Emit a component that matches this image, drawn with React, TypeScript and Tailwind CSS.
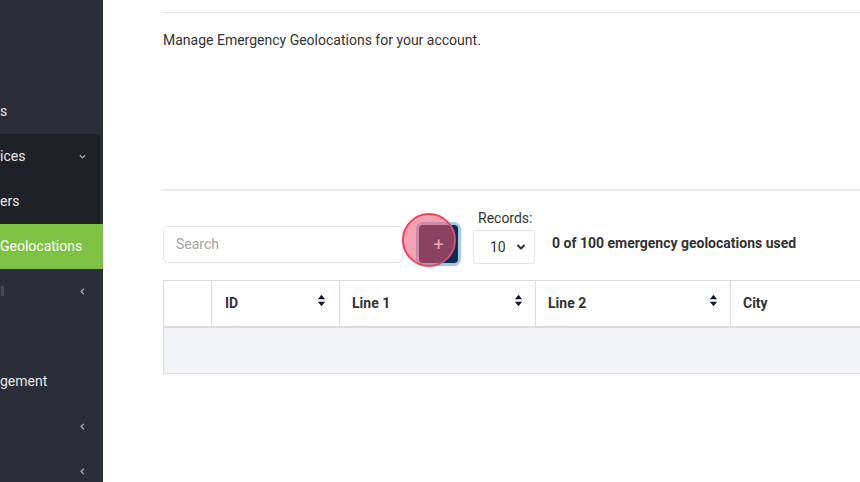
import React from 'react';

const font = { fontFamily: 'Roboto, "Liberation Sans", sans-serif' };

function Chevron({ dir }: { dir: 'down' | 'left' }) {
  return (
    <svg width="9" height="9" viewBox="0 0 10 10" className="text-gray-400">
      {dir === 'down' ? (
        <path d="M2 3.5 L5 6.5 L8 3.5" fill="none" stroke="currentColor" strokeWidth="1.6" />
      ) : (
        <path d="M6.5 2 L3.5 5 L6.5 8" fill="none" stroke="currentColor" strokeWidth="1.6" />
      )}
    </svg>
  );
}

function SortIcon() {
  return (
    <svg width="9" height="13" viewBox="0 0 10 16" className="text-gray-900 -mt-[6px]">
      <path d="M5 1 L9.5 6.5 H0.5 Z" fill="currentColor" />
      <path d="M5 15 L9.5 9.5 H0.5 Z" fill="currentColor" />
    </svg>
  );
}

const sideItems = [
  { label: 's', chevron: null, sub: false },
  { label: 'ices', chevron: 'down', sub: true },
  { label: 'ers', chevron: null, sub: true },
  { label: 'Geolocations', chevron: null, active: true },
  { label: '', chevron: 'left', faint: true },
  { label: '', chevron: null },
  { label: 'gement', chevron: null },
  { label: '', chevron: 'left' },
  { label: '', chevron: 'left' },
] as const;

export default function App() {
  return (
    <div className="flex w-[860px] h-[482px] overflow-hidden bg-white" style={font}>
      <aside className="w-[103px] shrink-0 bg-[#2b2e39] flex flex-col pt-[89px] border-r-[3px] border-[#2e2f33]">
        {sideItems.map((it, i) => (
          <div
            key={i}
            className={`h-[45px] shrink-0 flex items-center justify-between pr-[13px] text-[14px] ${
              'active' in it && it.active
                ? 'bg-[#7dc242] text-white -mr-[3px] pr-[16px]'
                : 'sub' in it && it.sub
                ? 'bg-[#1f2128] text-[#e6e6e6]'
                : 'text-[#e6e6e6]'
            }`}
          >
            <span className="whitespace-nowrap">
              {'faint' in it && it.faint ? <span className="inline-block w-[3px] h-[10px] bg-[#444955] ml-[1px]" /> : it.label}
            </span>
            {it.chevron && <Chevron dir={it.chevron} />}
          </div>
        ))}
      </aside>

      <main className="flex-1 min-w-0 pl-[60px] text-[#333]">
        <div className="h-[13px] border-b border-[#e6e6e6]" />
        <p className="mt-[17px] text-[14px]">Manage Emergency Geolocations for your account.</p>

        <div className="mt-[138px] border-b-2 border-[#ebebeb] w-[760px]" />

        <div className="flex items-end mt-[19px]">
          <div className="w-[240px] h-[37px] rounded-[5px] border border-[#e4e4e4] flex items-center px-[12px] text-[14px] text-[#a3a3a3] mb-[1px]">
            Search
          </div>
          <div className="relative ml-[16px] mb-[1px]">
            <button className="w-[39px] h-[38px] rounded-[4px] bg-[#0c2c52] text-white text-[18px] flex items-center justify-center ring-[3px] ring-[#9ccbee]">
              +
            </button>
            <div className="absolute left-[-17px] top-[-12px] w-[54px] h-[54px] rounded-full bg-[#f0566f]/55 border-2 border-[#e8475f]" />
          </div>
          <div className="ml-[15px] flex flex-col">
            <span className="text-[14px] pl-[5px] leading-[16px] mb-[4px]">Records:</span>
            <div className="w-[62px] h-[34px] border border-[#e4e4e4] rounded-[2px] flex items-center justify-between pl-[16px] pr-[8px] text-[14px]">
              <span>10</span>
              <svg width="10" height="8" viewBox="0 0 10 8">
                <path d="M1.5 2 L5 5.5 L8.5 2" fill="none" stroke="#333" strokeWidth="2" />
              </svg>
            </div>
          </div>
          <span className="ml-[17px] mb-[10px] text-[14px] font-bold whitespace-nowrap">
            0 of 100 emergency geolocations used
          </span>
        </div>

        <table className="mt-[16px] border-collapse text-[14px] w-[760px] table-fixed">
          <thead>
            <tr className="h-[46px] border-t border-[#dcdcdc]">
              <th className="w-[48px] border-l border-r border-[#dcdcdc]" />
              <th className="w-[128px] border-r border-[#dcdcdc] text-left font-bold px-[13px]">
                <div className="flex items-center justify-between">ID<SortIcon /></div>
              </th>
              <th className="w-[196px] border-r border-[#dcdcdc] text-left font-bold px-[12px]">
                <div className="flex items-center justify-between">Line 1<SortIcon /></div>
              </th>
              <th className="w-[195px] border-r border-[#dcdcdc] text-left font-bold px-[12px]">
                <div className="flex items-center justify-between">Line 2<SortIcon /></div>
              </th>
              <th className="text-left font-bold px-[12px]">City</th>
            </tr>
          </thead>
          <tbody>
            <tr className="h-[47px] bg-[#f3f4f7] border-t-2 border-b border-[#dcdcdc]">
              <td className="border-l border-[#dcdcdc]" colSpan={5} />
            </tr>
          </tbody>
        </table>
      </main>
    </div>
  );
}
